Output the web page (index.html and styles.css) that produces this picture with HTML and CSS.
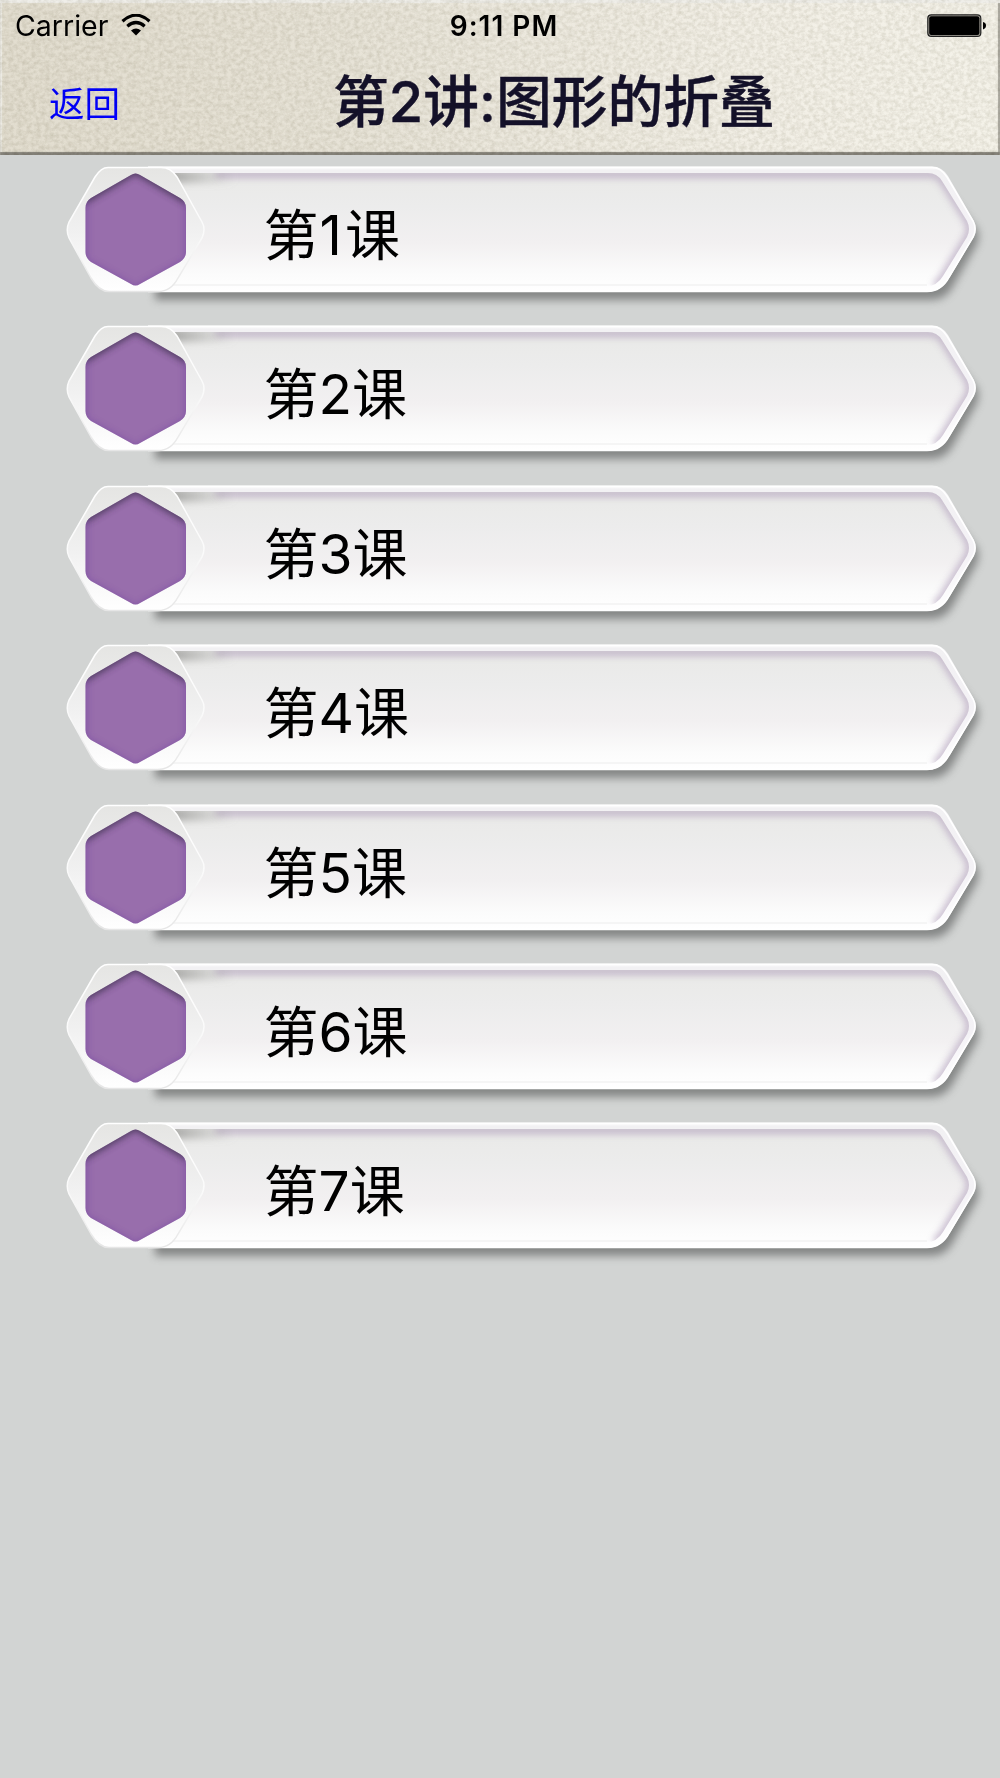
FILE: index.html
```html
<!DOCTYPE html>
<html lang="zh-CN">
<head>
<meta charset="utf-8">
<title>第2讲:图形的折叠</title>
<link rel="stylesheet" href="styles.css">
</head>
<body>
<svg class="defs" width="0" height="0" aria-hidden="true">
  <defs>
    <linearGradient id="face" x1="0" y1="0" x2="0" y2="1">
      <stop offset="0" stop-color="#e9e9e7"/><stop offset=".3" stop-color="#ececec"/><stop offset=".62" stop-color="#f2f0f1"/><stop offset=".88" stop-color="#fbfbfb"/><stop offset="1" stop-color="#fefefe"/>
    </linearGradient>
    <linearGradient id="rim" x1="0" y1="0" x2="0" y2="1">
      <stop offset="0" stop-color="#fff"/><stop offset=".03" stop-color="#f2f1f3"/><stop offset=".55" stop-color="#f4f2f6"/><stop offset="1" stop-color="#fff"/>
    </linearGradient>
    <linearGradient id="nut" x1="0" y1="0" x2="0" y2="1">
      <stop offset="0" stop-color="#e5e5e3"/><stop offset=".5" stop-color="#f0f0f0"/><stop offset="1" stop-color="#fff"/>
    </linearGradient>
    <linearGradient id="nutEdge" x1="0" y1="0" x2="0" y2="1">
      <stop offset="0" stop-color="#fff"/><stop offset=".55" stop-color="#fafafa"/><stop offset="1" stop-color="#e6e6e6"/>
    </linearGradient>
    <linearGradient id="fade" gradientUnits="userSpaceOnUse" x1="170" y1="0" x2="236" y2="0">
      <stop offset="0" stop-color="#888885" stop-opacity=".7"/><stop offset="1" stop-color="#999" stop-opacity="0"/>
    </linearGradient>
    <filter id="blur3" filterUnits="userSpaceOnUse" x="0" y="0" width="1000" height="159"><feGaussianBlur stdDeviation="3.5"/></filter>
    <filter id="blur4" filterUnits="userSpaceOnUse" x="0" y="0" width="1000" height="159"><feGaussianBlur stdDeviation="4.5"/></filter>
    <clipPath id="innerClip"><path d="M150 18H928Q937 18 942 26L967 66Q971 74 967 82L943 121Q937 131 927 131H150Z"/></clipPath>
    <clipPath id="gemClip"><path d="M131 20Q135.500 17 140 20L180 43Q186 46.500 186 53V97Q186 103 180 107L140 129Q135.500 132 131 129L91 107Q85.500 103 85.500 97V53Q85.500 46.500 91 43Z"/></clipPath>
    <symbol id="plate" viewBox="0 0 1000 159">
      <path d="M155 24H926Q937 24 944 33L977 74Q980 80 977 89L952 133Q945 145 932 145H155Z" fill="#5d5f5f" opacity=".66" filter="url(#blur4)"/>
      <path d="M148 11.500H932Q942 11.500 948 21L974 66Q978 74 974 82L950 122Q942 137.300 927 137.300H148Z" fill="url(#rim)"/>
      <path d="M148 12.500H932Q941 12.500 947 22L973 66Q977 74 973 82L949 122Q941 136.300 927 136.300H148" fill="none" stroke="#fff" stroke-width="1.500"/>
      <g clip-path="url(#innerClip)">
        <rect x="140" y="17" width="840" height="115" fill="url(#face)"/>
        <path d="M215 19H929Q938 19 943 26L968 66Q972 74 968 82L944 121Q940 128 935 131" fill="none" stroke="#b9aac2" stroke-width="8" opacity=".8" filter="url(#blur3)"/>
        <rect x="140" y="15" width="102" height="13" fill="url(#fade)" filter="url(#blur3)"/>
        <path d="M150 130.500H927" stroke="#f5f5f5" stroke-width="3"/>
      </g>
      <path d="M108 12.500H161Q171 12.500 177 22L202 67Q206 74 202 83L178 123Q171 136.500 158 136.500H109Q99 136.500 91 123L69 83Q65.500 75 69 67L95 22Q101 12.500 108 12.500Z" fill="url(#nut)" stroke="url(#nutEdge)" stroke-width="1.500"/>
      <g clip-path="url(#gemClip)">
        <rect x="80" y="12" width="110" height="124" fill="#986eac"/>
        <path d="M81 46L135.500 14L190 46" fill="none" stroke="#453454" stroke-width="9" opacity=".9" filter="url(#blur3)"/>
        <path d="M84 42V106L135.500 135L188 106V42" fill="none" stroke="#7142a0" stroke-width="5" opacity=".7" filter="url(#blur3)"/>
      </g>
    </symbol>
  </defs>
</svg>

<header class="header">
  <svg class="linen" width="1000" height="155" aria-hidden="true">
    <filter id="grain" x="0" y="0" width="100%" height="100%">
      <feTurbulence type="fractalNoise" baseFrequency=".22 .26" numOctaves="4" seed="8"/>
      <feColorMatrix values="0 0 0 0 .5  0 0 0 0 .48  0 0 0 0 .4  1.300 0 0 0 -.42"/>
    </filter>
    <rect width="1000" height="155" filter="url(#grain)"/>
  </svg>
  <div class="status">
    <div class="carrier">Carrier
      <svg width="30" height="22" viewBox="0 0 30 22" aria-hidden="true">
        <path d="M1.500 7.200Q15-4.800 28.500 7.200" fill="none" stroke="#000" stroke-width="3.200"/>
        <path d="M6.300 12.200Q15 4.800 23.700 12.200" fill="none" stroke="#000" stroke-width="3.200"/>
        <path d="M10 16.500Q15 12.300 20 16.500L15 21.500Z"/>
      </svg>
    </div>
    <time class="clock">9:11 PM</time>
    <svg class="battery" width="60" height="24" viewBox="0 0 60 24" aria-hidden="true">
      <rect x=".8" y=".8" width="53" height="21.600" rx="3.500" fill="#aaa79e" stroke="#222" stroke-width="1.200"/>
      <rect x="2.200" y="2.200" width="50.200" height="18.800" rx="2"/>
      <path d="M56 8Q59 8.500 59 11.600T56 15.500Z"/>
    </svg>
  </div>
  <nav class="bar">
    <a class="back">返回</a>
    <h1 class="title">第2讲:图形的折叠</h1>
  </nav>
</header>

<ul class="lessons">
  <li class="lesson"><svg class="plate" aria-hidden="true"><use href="#plate"/></svg><span class="name">第<span class="one">1</span>课</span></li>
  <li class="lesson"><svg class="plate" aria-hidden="true"><use href="#plate"/></svg><span class="name">第2课</span></li>
  <li class="lesson"><svg class="plate" aria-hidden="true"><use href="#plate"/></svg><span class="name">第3课</span></li>
  <li class="lesson"><svg class="plate" aria-hidden="true"><use href="#plate"/></svg><span class="name">第4课</span></li>
  <li class="lesson"><svg class="plate" aria-hidden="true"><use href="#plate"/></svg><span class="name">第5课</span></li>
  <li class="lesson"><svg class="plate" aria-hidden="true"><use href="#plate"/></svg><span class="name">第6课</span></li>
  <li class="lesson"><svg class="plate" aria-hidden="true"><use href="#plate"/></svg><span class="name">第7课</span></li>
</ul>
</body>
</html>
```
FILE: styles.css
```css
* { box-sizing: border-box; }

body {
  margin: 0;
  width: 1000px;
  min-height: 1778px;
  background: #d2d4d3;
  color: #000;
  font-family: Inter, "Noto Sans CJK SC", sans-serif;
}

.defs { display: block; height: 0; }

.header {
  display: grid;
  height: 155px;
  background: linear-gradient(90deg, #e2ddcf, #e7e3d7 35%, #f2efe6 75%, #f4f2e9);
  box-shadow: inset 0 3px 1px #efeee9, inset 0 -3px 1px #858279, inset -2px 0 1px #aaa89f, inset 2px 0 1px #efede6;
  grid-template-rows: 50px 105px;
}

.linen { grid-area: 1 / 1 / 3 / 2; mix-blend-mode: multiply; opacity: .5; }

.status {
  grid-area: 1 / 1;
  display: grid;
  grid-template-columns: 1fr auto 1fr;
  align-items: center;
  padding: 0 13px 0 15px;
  font-size: 28.5px;
  line-height: 52px;
}

.carrier { display: flex; gap: 13px; align-items: center; }
.carrier svg { margin-top: -3px; }
.clock { font-weight: 600; font-size: 28px; letter-spacing: 1px; padding-left: 6px; }
.battery { justify-self: end; }

.bar {
  grid-area: 2 / 1;
  display: flex;
  align-items: center;
  padding-left: 49px;
}

.back { width: 284px; font-size: 35.500px; color: #00f; line-height: 105px; padding-top: 3px; }

.title {
  margin: 0;
  font-size: 55.800px;
  font-weight: 500;
  line-height: 103px;
  padding-bottom: 2px;
  color: #14112a;
  white-space: nowrap;
  -webkit-text-stroke: .4px #14112a;
}

.lessons { list-style: none; margin: 0; padding: 0; }
.lesson { display: grid; height: 159.400px; }
.plate { grid-area: 1 / 1; width: 1000px; height: 159px; }
.name { grid-area: 1 / 1; padding: 40px 0 0 263.500px; font-size: 55px; line-height: 80px; }
.one { padding: 0 3px 0 1px; }
```
